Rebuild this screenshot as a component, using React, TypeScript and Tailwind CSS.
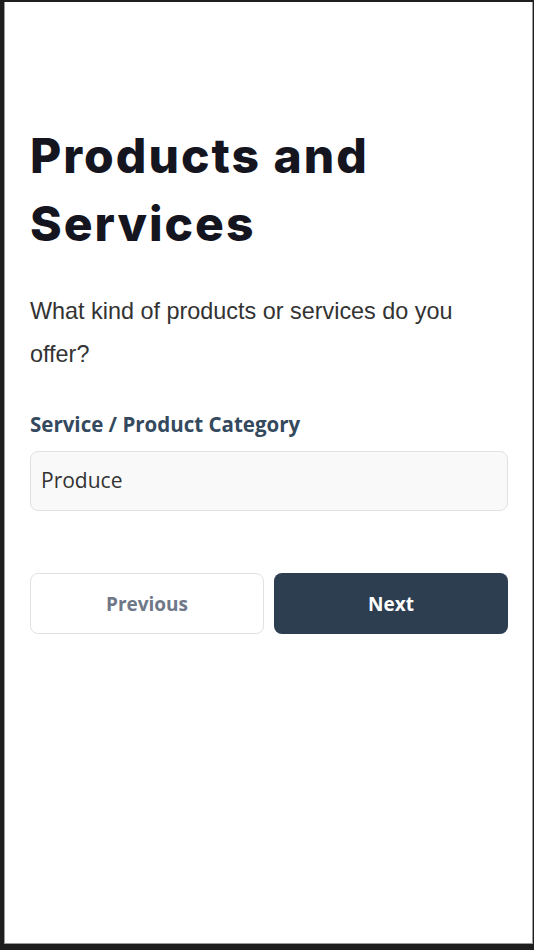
export default function App() {
  return (
    <div className="h-screen w-full bg-[#1e1e1e] pt-[2px] pl-[4px] pr-[1px] pb-[6px]">
      <div className="h-full bg-white border-r border-b border-l border-[#9a9a9a] pl-[25px] pr-[24px] pt-[120px] font-['Open_Sans',sans-serif]">
        <h1 className="font-['Inter',sans-serif] text-[48px] font-extrabold leading-[68px] tracking-[2px] text-[#15151f]">
          Products and
          <br />
          Services
        </h1>
        <p className="mt-8 font-['Liberation_Sans',Arial,sans-serif] text-[23.4px] leading-[43px] text-[#333333]">
          What kind of products or services do you offer?
        </p>
        <label className="mt-[35px] block text-[20.5px] font-bold leading-[26px] text-[#34495e]">
          Service / Product Category
        </label>
        <div className="mt-[14px] flex h-[60px] items-center rounded-lg border border-[#e2e2e4] bg-[#f9f9f9] px-[10px] text-[21px] text-[#333333]">
          Produce
        </div>
        <div className="mt-[62px] grid grid-cols-2 gap-[10px]">
          <button className="h-[61px] rounded-lg border border-[#e2e2e4] bg-white pt-[2px] text-[19px] font-bold text-[#6e7888]">
            Previous
          </button>
          <button className="h-[61px] rounded-lg bg-[#2c3e50] pt-[2px] text-[19px] font-bold text-white">
            Next
          </button>
        </div>
      </div>
    </div>
  );
}
